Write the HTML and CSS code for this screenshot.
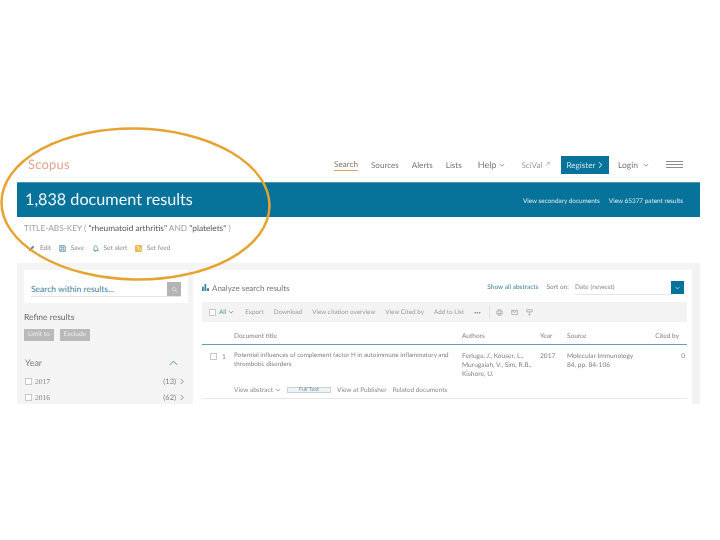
FILE: index.html
```html
<!DOCTYPE html>
<html lang="en">
<head>
<meta charset="utf-8">
<title>Scopus document results</title>
<link rel="stylesheet" href="styles.css">
</head>
<body>
<div class="slide">
  <header class="topbar">
    <div class="logo">Scopus</div>
    <nav class="nav">
      <a class="nav-item current">Search</a>
      <a class="nav-item">Sources</a>
      <a class="nav-item">Alerts</a>
      <a class="nav-item">Lists</a>
      <a class="nav-item nav-help">Help <svg class="chev" viewBox="0 0 8 5"><path d="M1 1l3 3 3-3"/></svg></a>
      <a class="nav-item nav-scival">SciVal <span class="ext">↗</span></a>
      <a class="register">Register <svg class="reg-chev" viewBox="0 0 6 9"><path d="M1 1l3.500 3.500L1 8"/></svg></a>
      <a class="nav-item nav-login">Login <svg class="chev" viewBox="0 0 8 5"><path d="M1 1l3 3 3-3"/></svg></a>
      <span class="burger"><i></i><i></i><i></i></span>
    </nav>
  </header>
  <section class="band">
    <h1 class="band-title">1,838 document results</h1>
    <div class="band-links"><a>View secondary documents</a><a>View 65377 patent results</a></div>
  </section>
  <div class="query">TITLE-ABS-KEY ( <b>"rheumatoid arthritis"</b> AND <b>"platelets"</b> )</div>
  <div class="actions">
    <span class="action"><svg viewBox="0 0 10 10"><path class="i-fill-dark" d="M1 9l1-3 5-5 2 2-5 5z"/></svg>Edit</span>
    <span class="action"><svg viewBox="0 0 10 10"><path class="i-line-blue" d="M1 1h7l1 1v7H1zM3 1v3h4V1M3 9V6h4v3"/></svg>Save</span>
    <span class="action"><svg viewBox="0 0 10 10"><path class="i-line-blue" d="M5 1c2 0 2.500 2 2.500 3.500L9 8H2.500L3 4.500C3 3 3 1 5 1zM4 9h2"/></svg>Set alert</span>
    <span class="action"><svg viewBox="0 0 10 10"><rect class="i-rss" width="10" height="10" rx="1.500"/><path class="i-rss-w" d="M2.500 4.500c2 0 3.500 1.500 3.500 3.500M2.500 2c3.500 0 6 2.500 6 6"/></svg>Set feed</span>
  </div>
  <main class="panel">
    <aside class="side">
      <div class="search-card">
        <div class="search-row">
          <span class="search-text">Search within results...</span>
          <span class="search-btn"><svg viewBox="0 0 10 10"><circle cx="4.500" cy="4.500" r="2.500"/><path d="M6.500 6.500L9 9"/></svg></span>
        </div>
      </div>
      <h2 class="refine">Refine results</h2>
      <div class="refine-btns"><span class="ghost">Limit to</span><span class="ghost">Exclude</span></div>
      <div class="facet-head"><span>Year</span><svg class="facet-up" viewBox="0 0 10 6"><path d="M1 5l4-4 4 4"/></svg></div>
      <div class="facet-row"><span class="box"></span><span class="facet-label">2017</span><span class="count">(13)</span><svg class="facet-go" viewBox="0 0 5 8"><path d="M1 1l3 3-3 3"/></svg></div>
      <div class="facet-row"><span class="box"></span><span class="facet-label">2016</span><span class="count">(62)</span><svg class="facet-go" viewBox="0 0 5 8"><path d="M1 1l3 3-3 3"/></svg></div>
    </aside>
    <section class="results">
      <div class="res-top">
        <span class="analyze"><svg viewBox="0 0 10 10"><path d="M0 4h2.500v6H0zM3.500 0H6v10H3.500zM7 6h3v4H7z"/></svg>Analyze search results</span>
        <span class="res-top-right">
          <a class="show-all">Show all abstracts</a>
          <span class="sort">Sort on:</span>
          <span class="sort-val">Date (newest)</span>
          <span class="sort-btn"><svg viewBox="0 0 8 5"><path d="M1 1l3 3 3-3"/></svg></span>
        </span>
      </div>
      <div class="toolbar">
        <span class="box"></span>
        <span class="tool tool-all">All <svg class="chev" viewBox="0 0 8 5"><path d="M1 1l3 3 3-3"/></svg></span>
        <span class="tool">Export</span>
        <span class="tool">Download</span>
        <span class="tool">View citation overview</span>
        <span class="tool">View Cited by</span>
        <span class="tool">Add to List</span>
        <span class="tool tool-more">•••</span>
        <span class="tool-sep"></span>
        <svg class="tool-ic" viewBox="0 0 10 10"><path d="M3 3V1h4v2M1 3h8v4H1zM3 6h4v3H3z"/></svg>
        <svg class="tool-ic" viewBox="0 0 10 10"><path d="M1 2h8v6H1zM1 2l4 3 4-3"/></svg>
        <svg class="tool-ic" viewBox="0 0 10 10"><path d="M1 1h8v3H1zM5 4v5M3.500 7.500L5 9l1.500-1.500"/></svg>
      </div>
      <div class="table-head">
        <span class="c-title">Document title</span>
        <span>Authors</span>
        <span>Year</span>
        <span>Source</span>
        <span class="c-cited">Cited by</span>
      </div>
      <div class="row">
        <span class="row-check"><span class="box"></span><span class="row-num">1</span></span>
        <span class="row-title">Potential influences of complement factor H in autoimmune inflammatory and thrombotic disorders</span>
        <span>Ferluga, J., Kouser, L., Murugaiah, V., Sim, R.B., Kishore, U.</span>
        <span>2017</span>
        <span>Molecular Immunology<br>84, pp. 84-106</span>
        <span class="c-cited">0</span>
      </div>
      <div class="row-links">
        <span>View abstract <svg class="chev" viewBox="0 0 8 5"><path d="M1 1l3 3 3-3"/></svg></span>
        <span class="fulltext">Full Text</span>
        <span>View at Publisher</span>
        <span>Related documents</span>
      </div>
    </section>
  </main>
  <svg class="ring" viewBox="0 0 272 154"><ellipse cx="135.500" cy="77" rx="134" ry="75.500" transform="rotate(1 135.500 77)"/></svg>
</div>
</body>
</html>
```
FILE: styles.css
```css
* { box-sizing: border-box; }
html, body { margin: 0; background: #fff; }
body { width: 720px; height: 540px; overflow: hidden; padding-top: 155px; font-family: Lato, "Liberation Sans", sans-serif; color: #707070; text-rendering: geometricPrecision; }
svg { display: block; }
.slide { position: relative; width: 683px; margin-left: 17px; filter: blur(.3px); }

.topbar { height: 27px; display: flex; justify-content: space-between; align-items: flex-start; padding-right: 17px; }
.logo { margin: 1px 0 0 11px; font-size: 13px; line-height: 17px; color: #e2a58c; letter-spacing: .2px; }
.nav { display: flex; align-items: center; height: 19px; font-size: 8.100px; color: #777; }
.nav-item { display: flex; align-items: center; gap: 3px; margin-right: 13px; line-height: 12px; white-space: nowrap; }
.current { color: #7d7468; border-bottom: 1px solid #e0a458; }
.nav-help { margin-left: 3px; margin-right: 16px; font-size: 9px; }
.nav-scival { margin-right: 11px; color: #999; }
.ext { font-size: 6px; }
.chev { width: 6px; height: 4px; fill: none; stroke: currentColor; stroke-width: 1; }
.register { width: 48px; height: 18px; display: flex; align-items: center; justify-content: center; gap: 3px; background: #07729a; color: #d6e6ec; margin-right: 9px; }
.reg-chev { width: 5px; height: 8px; fill: none; stroke: #e4eef2; stroke-width: 1.200; }
.nav-login { margin-right: 17px; font-size: 8.500px; gap: 5px; }
.burger { width: 17px; display: flex; flex-direction: column; gap: 2px; }
.burger i { display: block; height: 1px; background: #8c8c8c; }

.band { height: 35px; background: #07729a; display: flex; justify-content: space-between; align-items: center; padding: 0 17px 0 8px; border-top: 1px solid #4c98b5; color: #fff; }
.band-title { margin: 0 0 2px; font-size: 16.200px; font-weight: 400; color: #f2f7f9; }
.band-links { display: flex; gap: 9px; font-size: 6.400px; color: #dcebf0; margin-top: 3px; }

.query { margin: 6px 0 0 7px; font-size: 8.300px; line-height: 11px; color: #a0a0a0; }
.query b { font-weight: 400; color: #555; }
.actions { display: flex; margin: 9px 0 0 11px; height: 10px; align-items: center; font-size: 6.500px; color: #8b8b8b; }
.action { display: flex; align-items: center; gap: 5px; margin-right: 7.500px; }
.action svg { width: 7px; height: 7px; }
.i-fill-dark { fill: #6c7f8a; }
.i-line-blue { fill: none; stroke: #3d7f9c; stroke-width: 1; }
.i-rss { fill: #eeb550; }
.i-rss-w { fill: none; stroke: #fff; stroke-width: 1; }

.panel { margin-top: 10px; height: 141px; overflow: hidden; background: #f4f4f4; display: flex; padding: 7px 8px 0 7px; }
.side { width: 164px; margin-right: 5px; flex: none; }
.search-card { background: #fff; height: 33px; padding: 12px 7px 0; }
.search-row { display: flex; justify-content: space-between; align-items: flex-start; height: 14px; border-bottom: 1px solid #e2e2e2; box-sizing: content-box; }
.search-text { font-size: 8.500px; line-height: 15px; color: #3d7f9c; }
.search-btn { width: 14px; height: 14px; background: #b4b4b4; display: flex; align-items: center; justify-content: center; }
.search-btn svg { width: 7px; height: 7px; fill: none; stroke: #e4e4e4; stroke-width: 1; }
.refine { margin: 8px 0 0; font-size: 8.500px; font-weight: 400; line-height: 12px; color: #666; }
.refine-btns { display: flex; gap: 6px; margin-top: 6px; }
.ghost { height: 12px; padding: 0 4px; background: #b9b9b9; color: #ececec; font-size: 6.500px; line-height: 12px; }
.facet-head { display: flex; justify-content: space-between; align-items: center; margin-top: 16px; padding: 0 10px 0 1px; font-size: 9px; line-height: 12px; color: #808080; }
.facet-up { width: 9px; height: 6px; fill: none; stroke: #3d7f9c; stroke-width: 1; }
.facet-row { display: flex; align-items: center; height: 16px; font-size: 7.500px; color: #808080; padding: 0 4px 0 1px; }
.facet-head + .facet-row { margin-top: 4px; }
.box { width: 7px; height: 7px; border: 1px solid #c8c8c8; background: #fff; flex: none; }
.facet-label { margin-left: 3px; flex: 1; font-family: "Liberation Serif", serif; }
.count { margin-right: 4px; }
.facet-go { width: 4px; height: 7px; fill: none; stroke: #3d7f9c; stroke-width: 1; }

.results { flex: 1; background: #fff; padding: 0 5px 0 9px; font-size: 6.500px; color: #808080; }
.res-top { height: 32px; display: flex; justify-content: space-between; align-items: center; padding-top: 3px; }
.analyze { display: flex; align-items: center; gap: 3px; font-size: 8px; color: #777; }
.analyze svg { width: 7px; height: 7px; fill: #3d7f9c; }
.res-top-right { display: flex; align-items: center; font-size: 6.500px; margin-right: 3px; }
.show-all { color: #3d7f9c; margin-right: 8px; }
.sort { margin-right: 6px; }
.sort-val { width: 97px; height: 14px; line-height: 13px; color: #7b8c96; border-bottom: 1px solid #e6e6e6; }
.sort-btn { width: 13px; height: 13px; margin-left: -1px; background: #07729a; display: flex; align-items: center; justify-content: center; }
.sort-btn svg { width: 5px; height: 4px; fill: none; stroke: #e2eef3; stroke-width: 1.200; }

.toolbar { height: 20px; background: #f3f3f3; display: flex; align-items: center; padding-left: 7px; color: #9a9a9a; font-size: 6.300px; }
.tool { margin-right: 10px; white-space: nowrap; }
.tool-all { display: flex; align-items: center; gap: 2px; margin-left: 3px; margin-right: 11px; color: #5f8ba0; }
.tool-more { font-size: 4px; color: #7a7a7a; margin-right: 8px; }
.tool-sep { width: 1px; height: 14px; background: #e2e2e2; margin-right: 6px; }
.tool-ic { width: 7px; height: 7px; margin-right: 8px; fill: none; stroke: #a2a2a2; stroke-width: 1; }

.table-head, .row { display: grid; grid-template-columns: 32px 228px 78px 27px 84px 1fr; column-gap: 0; }
.table-head { height: 23px; border-bottom: 1px solid #64a0b5; padding-top: 10px; line-height: 9px; }
.table-head .c-title { grid-column: 1 / span 2; padding-left: 32px; }
.c-cited { text-align: right; padding-right: 8px; }
.row { padding-top: 7px; height: 37px; line-height: 8.800px; font-size: 6.600px; }
.row-title { font-size: 6.300px; }
.row .c-cited { padding-right: 2px; }
.row-check { display: flex; align-items: flex-start; padding: 1px 0 0 8px; }
.row-num { margin-left: 5px; }
.row-links { display: flex; align-items: center; gap: 6px; height: 17px; padding-left: 32px; border-bottom: 1px solid #e8e8e8; color: #888; }
.row-links span { display: flex; align-items: center; gap: 2px; white-space: nowrap; }
.row-links .fulltext { height: 6px; width: 44px; justify-content: center; background: #eef3f6; border: 1px solid #c9d2d8; font-size: 5.500px; line-height: 4px; color: #6f8ea0; }

.ring { position: absolute; left: -17px; top: -28px; width: 272px; height: 154px; fill: none; stroke: #e6a332; stroke-width: 2.500; }
```
